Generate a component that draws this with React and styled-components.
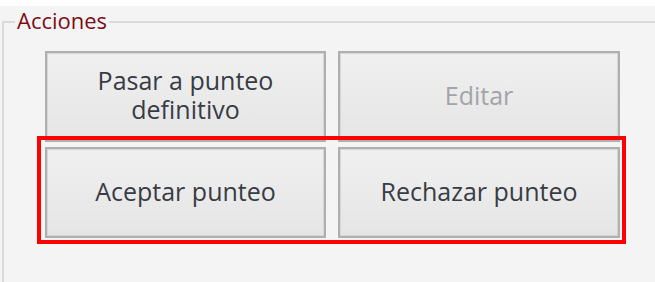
import styled, { createGlobalStyle } from "styled-components";

const GlobalStyle = createGlobalStyle`
  html, body {
    margin: 0;
    padding: 0;
    background: #ffffff;
    overflow: hidden;
  }
  body {
    font-family: "Open Sans", "Noto Sans", sans-serif;
  }
`;

export default function App() {
  return (
    <>
      <GlobalStyle />
      <Panel>
        <GroupBox>
          <Legend>Acciones</Legend>
          <ButtonGrid>
            <ActionButton>
              Pasar a punteo
              <br />
              definitivo
            </ActionButton>
            <ActionButton disabled>Editar</ActionButton>
            <ActionButton>Aceptar punteo</ActionButton>
            <ActionButton>Rechazar punteo</ActionButton>
            <Highlight />
          </ButtonGrid>
        </GroupBox>
      </Panel>
    </>
  );
}

// Styling starts here

const Panel = styled.div`
  margin-top: 6px;
  height: 276px;
  padding: 1px 0 0 2px;
  box-sizing: border-box;
  background: #f4f4f4;
  overflow: hidden;
`;

const GroupBox = styled.fieldset`
  margin: 0;
  width: 720px;
  min-height: 320px;
  box-sizing: border-box;
  padding: 0 0 0 11px;
  border: 2px solid #dadada;
`;

const Legend = styled.legend`
  padding: 0 2px 4px 2px;
  font-size: 22px;
  line-height: 26px;
  color: #7d0c14;
`;

const ButtonGrid = styled.div`
  position: relative;
  margin: 14px 0 0 30px;
  display: grid;
  grid-template-columns: 281px 282px;
  grid-template-rows: 91px 91px;
  column-gap: 12px;
  row-gap: 5px;
`;

const ActionButton = styled.button`
  display: flex;
  align-items: center;
  justify-content: center;
  margin: 0;
  padding: 0 0 3px 0;
  box-sizing: border-box;
  border: 2px solid #afafaf;
  box-shadow: inset 0 0 0 1px #d6d6d6;
  border-radius: 0;
  background: linear-gradient(#f0f0f0, #e5e5e5);
  font-family: "Open Sans", "Noto Sans", sans-serif;
  font-size: 25px;
  line-height: 29px;
  color: #383c44;
  text-align: center;

  &:disabled {
    color: #a2a4a8;
  }
`;

// annotation frame drawn over the second row
const Highlight = styled.div`
  position: absolute;
  left: -8px;
  top: 85px;
  width: 589px;
  height: 108px;
  box-sizing: border-box;
  border: 4px solid #ff0000;
  pointer-events: none;
`;
